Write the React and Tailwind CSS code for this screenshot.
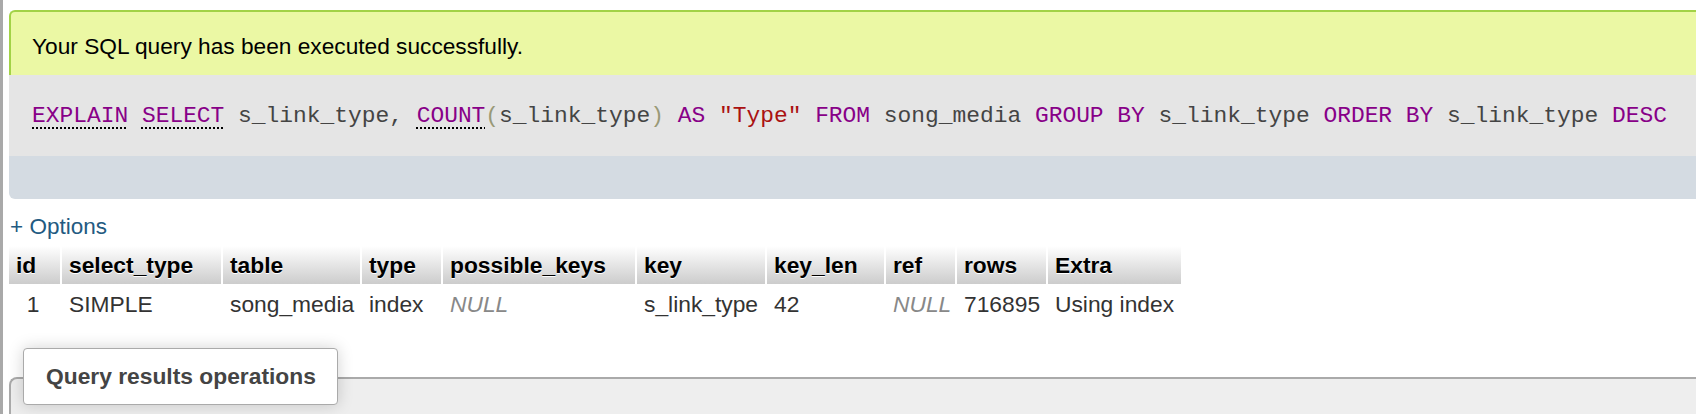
import React from "react";

const sans = "font-['Liberation_Sans',Arial,sans-serif]";
const mono = "font-['Liberation_Mono','Courier_New',monospace]";

const columns = [
  { name: "id", w: "w-[51px]" },
  { name: "select_type", w: "w-[161px]" },
  { name: "table", w: "w-[139px]" },
  { name: "type", w: "w-[81px]" },
  { name: "possible_keys", w: "w-[194px]" },
  { name: "key", w: "w-[130px]" },
  { name: "key_len", w: "w-[119px]" },
  { name: "ref", w: "w-[71px]" },
  { name: "rows", w: "w-[91px]" },
  { name: "Extra", w: "w-[135px]" },
];

const row = [
  { v: "1", center: true },
  { v: "SIMPLE" },
  { v: "song_media" },
  { v: "index" },
  { v: "NULL", isNull: true },
  { v: "s_link_type" },
  { v: "42" },
  { v: "NULL", isNull: true },
  { v: "716895" },
  { v: "Using index" },
];

function Kw({ children, dotted }) {
  return (
    <span
      className={
        "text-[#880088] " +
        (dotted ? "underline decoration-dotted decoration-black decoration-[1.5px] underline-offset-[6px]" : "")
      }
    >
      {children}
    </span>
  );
}

function CodeLine() {
  return (
    <code className={`${mono} text-[22.9px] text-[#444] whitespace-pre`}>
      <Kw dotted>EXPLAIN</Kw> <Kw dotted>SELECT</Kw> s_link_type, <Kw dotted>COUNT</Kw>
      <span className="text-[#999977]">(</span>s_link_type
      <span className="text-[#999977]">)</span> <Kw>AS</Kw>{" "}
      <span className="text-[#aa1111]">"Type"</span> <Kw>FROM</Kw> song_media <Kw>GROUP</Kw>{" "}
      <Kw>BY</Kw> s_link_type <Kw>ORDER</Kw> <Kw>BY</Kw> s_link_type <Kw>DESC</Kw>
    </code>
  );
}

export default function App() {
  return (
    <div className={`${sans} flex w-full h-[414px] overflow-hidden bg-white`}>
      <div className="w-[3px] shrink-0 bg-[#a9a9a9]" />
      <div className="flex-1 pl-[6px] flex flex-col">
        <div className="mt-[10px] flex flex-col">
          <div className="h-[65px] rounded-tl-[6px] border-t-2 border-l-2 border-[#a2d246] bg-[#ebf8a4] flex items-center pl-[21px] pt-[5px] text-[22.7px] text-black">
            Your SQL query has been executed successfully.
          </div>
          <div className="h-[81px] bg-[#e5e5e5] flex items-center pl-[23px] pt-[1px]">
            <CodeLine />
          </div>
          <div className="h-[43px] bg-[#d4dbe2] rounded-bl-[6px]" />
        </div>

        <a className="mt-[15px] ml-[1px] text-[22.5px] leading-[26px] text-[#235a81]">+ Options</a>

        <div className="mt-[6px] flex flex-col">
          <div className="flex h-[38px]">
            {columns.map((c, i) => (
              <div
                key={c.name}
                className={`${c.w} ${i > 0 ? "border-l-2 border-white" : ""} flex items-center pl-[7px] pt-[1px] bg-linear-to-b from-white to-[#cccccc] text-[22.8px] font-bold text-black [text-shadow:0_1px_0_#fff]`}
              >
                {c.name}
              </div>
            ))}
          </div>
          <div className="flex h-[40px]">
            {row.map((d, i) => (
              <div
                key={i}
                className={`${columns[i].w} ${i > 0 ? "border-l-2 border-transparent" : ""} flex items-center ${
                  d.center ? "justify-center pr-[3px]" : "pl-[7px]"
                } text-[22.8px] ${d.isNull ? "italic text-[#888]" : "text-[#333]"}`}
              >
                {d.v}
              </div>
            ))}
          </div>
        </div>

        <div className="relative mt-[53px] flex-1">
          <div className="h-full rounded-tl-[8px] border-t-2 border-l-2 border-[#aaaaaa] bg-[#eeeeee]" />
          <div className="absolute left-[14px] top-[-29px] w-[315px] h-[57px] bg-white border border-[#aaaaaa] rounded-[4px] shadow-[0_0_16px_rgba(0,0,0,0.18)] flex items-center pl-[22px] text-[22.8px] font-bold text-[#444]">
            Query results operations
          </div>
        </div>
      </div>
    </div>
  );
}
